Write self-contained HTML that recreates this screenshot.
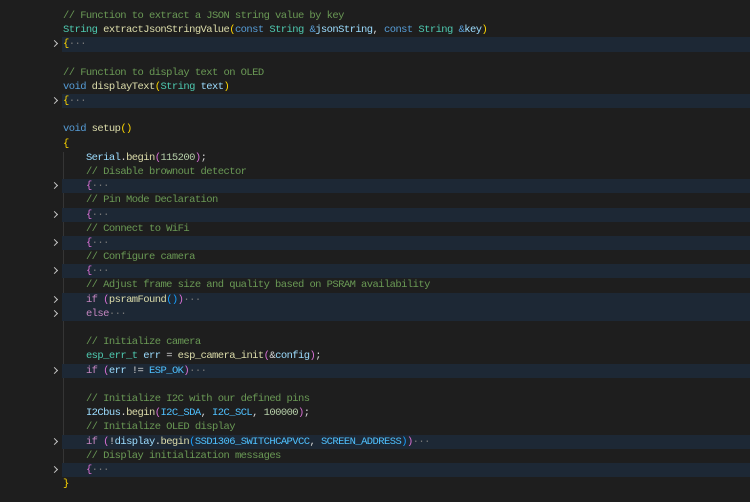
<!DOCTYPE html><html><head><style>
body{margin:0;width:750px;height:500px;background:#1e1e1e;overflow:hidden;position:relative;font-family:"Liberation Mono",monospace;font-size:10.5px;letter-spacing:-0.57px}
#w{position:absolute;left:0;top:2px;width:750px;height:500px}
.l{position:absolute;left:0;width:750px;height:14.18px;line-height:14.18px;white-space:pre;color:#d4d4d4}
.l span.t{position:absolute;left:63px}
.h::before{content:"";position:absolute;left:62px;right:0;top:0;bottom:0;background:#1d2835}
.a{position:absolute;left:52px;top:4px;width:4px;height:4px;border-right:1.3px solid #c5c5c5;border-top:1.3px solid #c5c5c5;transform:rotate(45deg)}
.c{color:#6a9955}.k{color:#569cd6}.ty{color:#4ec9b0}.f{color:#dcdcaa}.v{color:#9cdcfe}.n{color:#b5cea8}.y{color:#ffd700}.p{color:#da70d6}.b{color:#179fff}.ct{color:#c586c0}.e{color:#777}.cn{color:#4fc1ff}
.g{position:absolute;left:63px;width:1px;background:#353535;top:150px;height:325px}
</style></head><body><div id="w">
<div class="g"></div>
<div class="l" style="top:7px"><span class="t"><span class="c">// Function to extract a JSON string value by key</span></span></div>
<div class="l" style="top:21.2px"><span class="t"><span class="ty">String</span> <span class="f">extractJsonStringValue</span><span class="y">(</span><span class="k">const</span> <span class="ty">String</span> <span class="k">&amp;</span><span class="v">jsonString</span>, <span class="k">const</span> <span class="ty">String</span> <span class="k">&amp;</span><span class="v">key</span><span class="y">)</span></span></div>
<div class="l h" style="top:35.4px"><span class="a"></span><span class="t"><span class="y">{</span><span class="e">···</span></span></div>
<div class="l" style="top:63.7px"><span class="t"><span class="c">// Function to display text on OLED</span></span></div>
<div class="l" style="top:77.9px"><span class="t"><span class="k">void</span> <span class="f">displayText</span><span class="y">(</span><span class="ty">String</span> <span class="v">text</span><span class="y">)</span></span></div>
<div class="l h" style="top:92.1px"><span class="a"></span><span class="t"><span class="y">{</span><span class="e">···</span></span></div>
<div class="l" style="top:120.4px"><span class="t"><span class="k">void</span> <span class="f">setup</span><span class="y">()</span></span></div>
<div class="l" style="top:134.6px"><span class="t"><span class="y">{</span></span></div>
<div class="l" style="top:148.8px"><span class="t">    <span class="v">Serial</span>.<span class="f">begin</span><span class="p">(</span><span class="n">115200</span><span class="p">)</span>;</span></div>
<div class="l" style="top:163px"><span class="t">    <span class="c">// Disable brownout detector</span></span></div>
<div class="l h" style="top:177.1px"><span class="a"></span><span class="t">    <span class="p">{</span><span class="e">···</span></span></div>
<div class="l" style="top:191.3px"><span class="t">    <span class="c">// Pin Mode Declaration</span></span></div>
<div class="l h" style="top:205.5px"><span class="a"></span><span class="t">    <span class="p">{</span><span class="e">···</span></span></div>
<div class="l" style="top:219.7px"><span class="t">    <span class="c">// Connect to WiFi</span></span></div>
<div class="l h" style="top:233.9px"><span class="a"></span><span class="t">    <span class="p">{</span><span class="e">···</span></span></div>
<div class="l" style="top:248.1px"><span class="t">    <span class="c">// Configure camera</span></span></div>
<div class="l h" style="top:262.3px"><span class="a"></span><span class="t">    <span class="p">{</span><span class="e">···</span></span></div>
<div class="l" style="top:276.4px"><span class="t">    <span class="c">// Adjust frame size and quality based on PSRAM availability</span></span></div>
<div class="l h" style="top:290.6px"><span class="a"></span><span class="t">    <span class="ct">if</span> <span class="p">(</span><span class="f">psramFound</span><span class="b">()</span><span class="p">)</span><span class="e">···</span></span></div>
<div class="l h" style="top:304.8px"><span class="a"></span><span class="t">    <span class="ct">else</span><span class="e">···</span></span></div>
<div class="l" style="top:333.2px"><span class="t">    <span class="c">// Initialize camera</span></span></div>
<div class="l" style="top:347.4px"><span class="t">    <span class="ty">esp_err_t</span> <span class="v">err</span> = <span class="f">esp_camera_init</span><span class="p">(</span>&amp;<span class="v">config</span><span class="p">)</span>;</span></div>
<div class="l h" style="top:361.5px"><span class="a"></span><span class="t">    <span class="ct">if</span> <span class="p">(</span><span class="v">err</span> != <span class="cn">ESP_OK</span><span class="p">)</span><span class="e">···</span></span></div>
<div class="l" style="top:389.9px"><span class="t">    <span class="c">// Initialize I2C with our defined pins</span></span></div>
<div class="l" style="top:404.1px"><span class="t">    <span class="v">I2Cbus</span>.<span class="f">begin</span><span class="p">(</span><span class="cn">I2C_SDA</span>, <span class="cn">I2C_SCL</span>, <span class="n">100000</span><span class="p">)</span>;</span></div>
<div class="l" style="top:418.3px"><span class="t">    <span class="c">// Initialize OLED display</span></span></div>
<div class="l h" style="top:432.5px"><span class="a"></span><span class="t">    <span class="ct">if</span> <span class="p">(</span>!<span class="v">display</span>.<span class="f">begin</span><span class="b">(</span><span class="cn">SSD1306_SWITCHCAPVCC</span>, <span class="cn">SCREEN_ADDRESS</span><span class="b">)</span><span class="p">)</span><span class="e">···</span></span></div>
<div class="l" style="top:446.7px"><span class="t">    <span class="c">// Display initialization messages</span></span></div>
<div class="l h" style="top:460.8px"><span class="a"></span><span class="t">    <span class="p">{</span><span class="e">···</span></span></div>
<div class="l" style="top:475px"><span class="t"><span class="y">}</span></span></div>
</div></body></html>
